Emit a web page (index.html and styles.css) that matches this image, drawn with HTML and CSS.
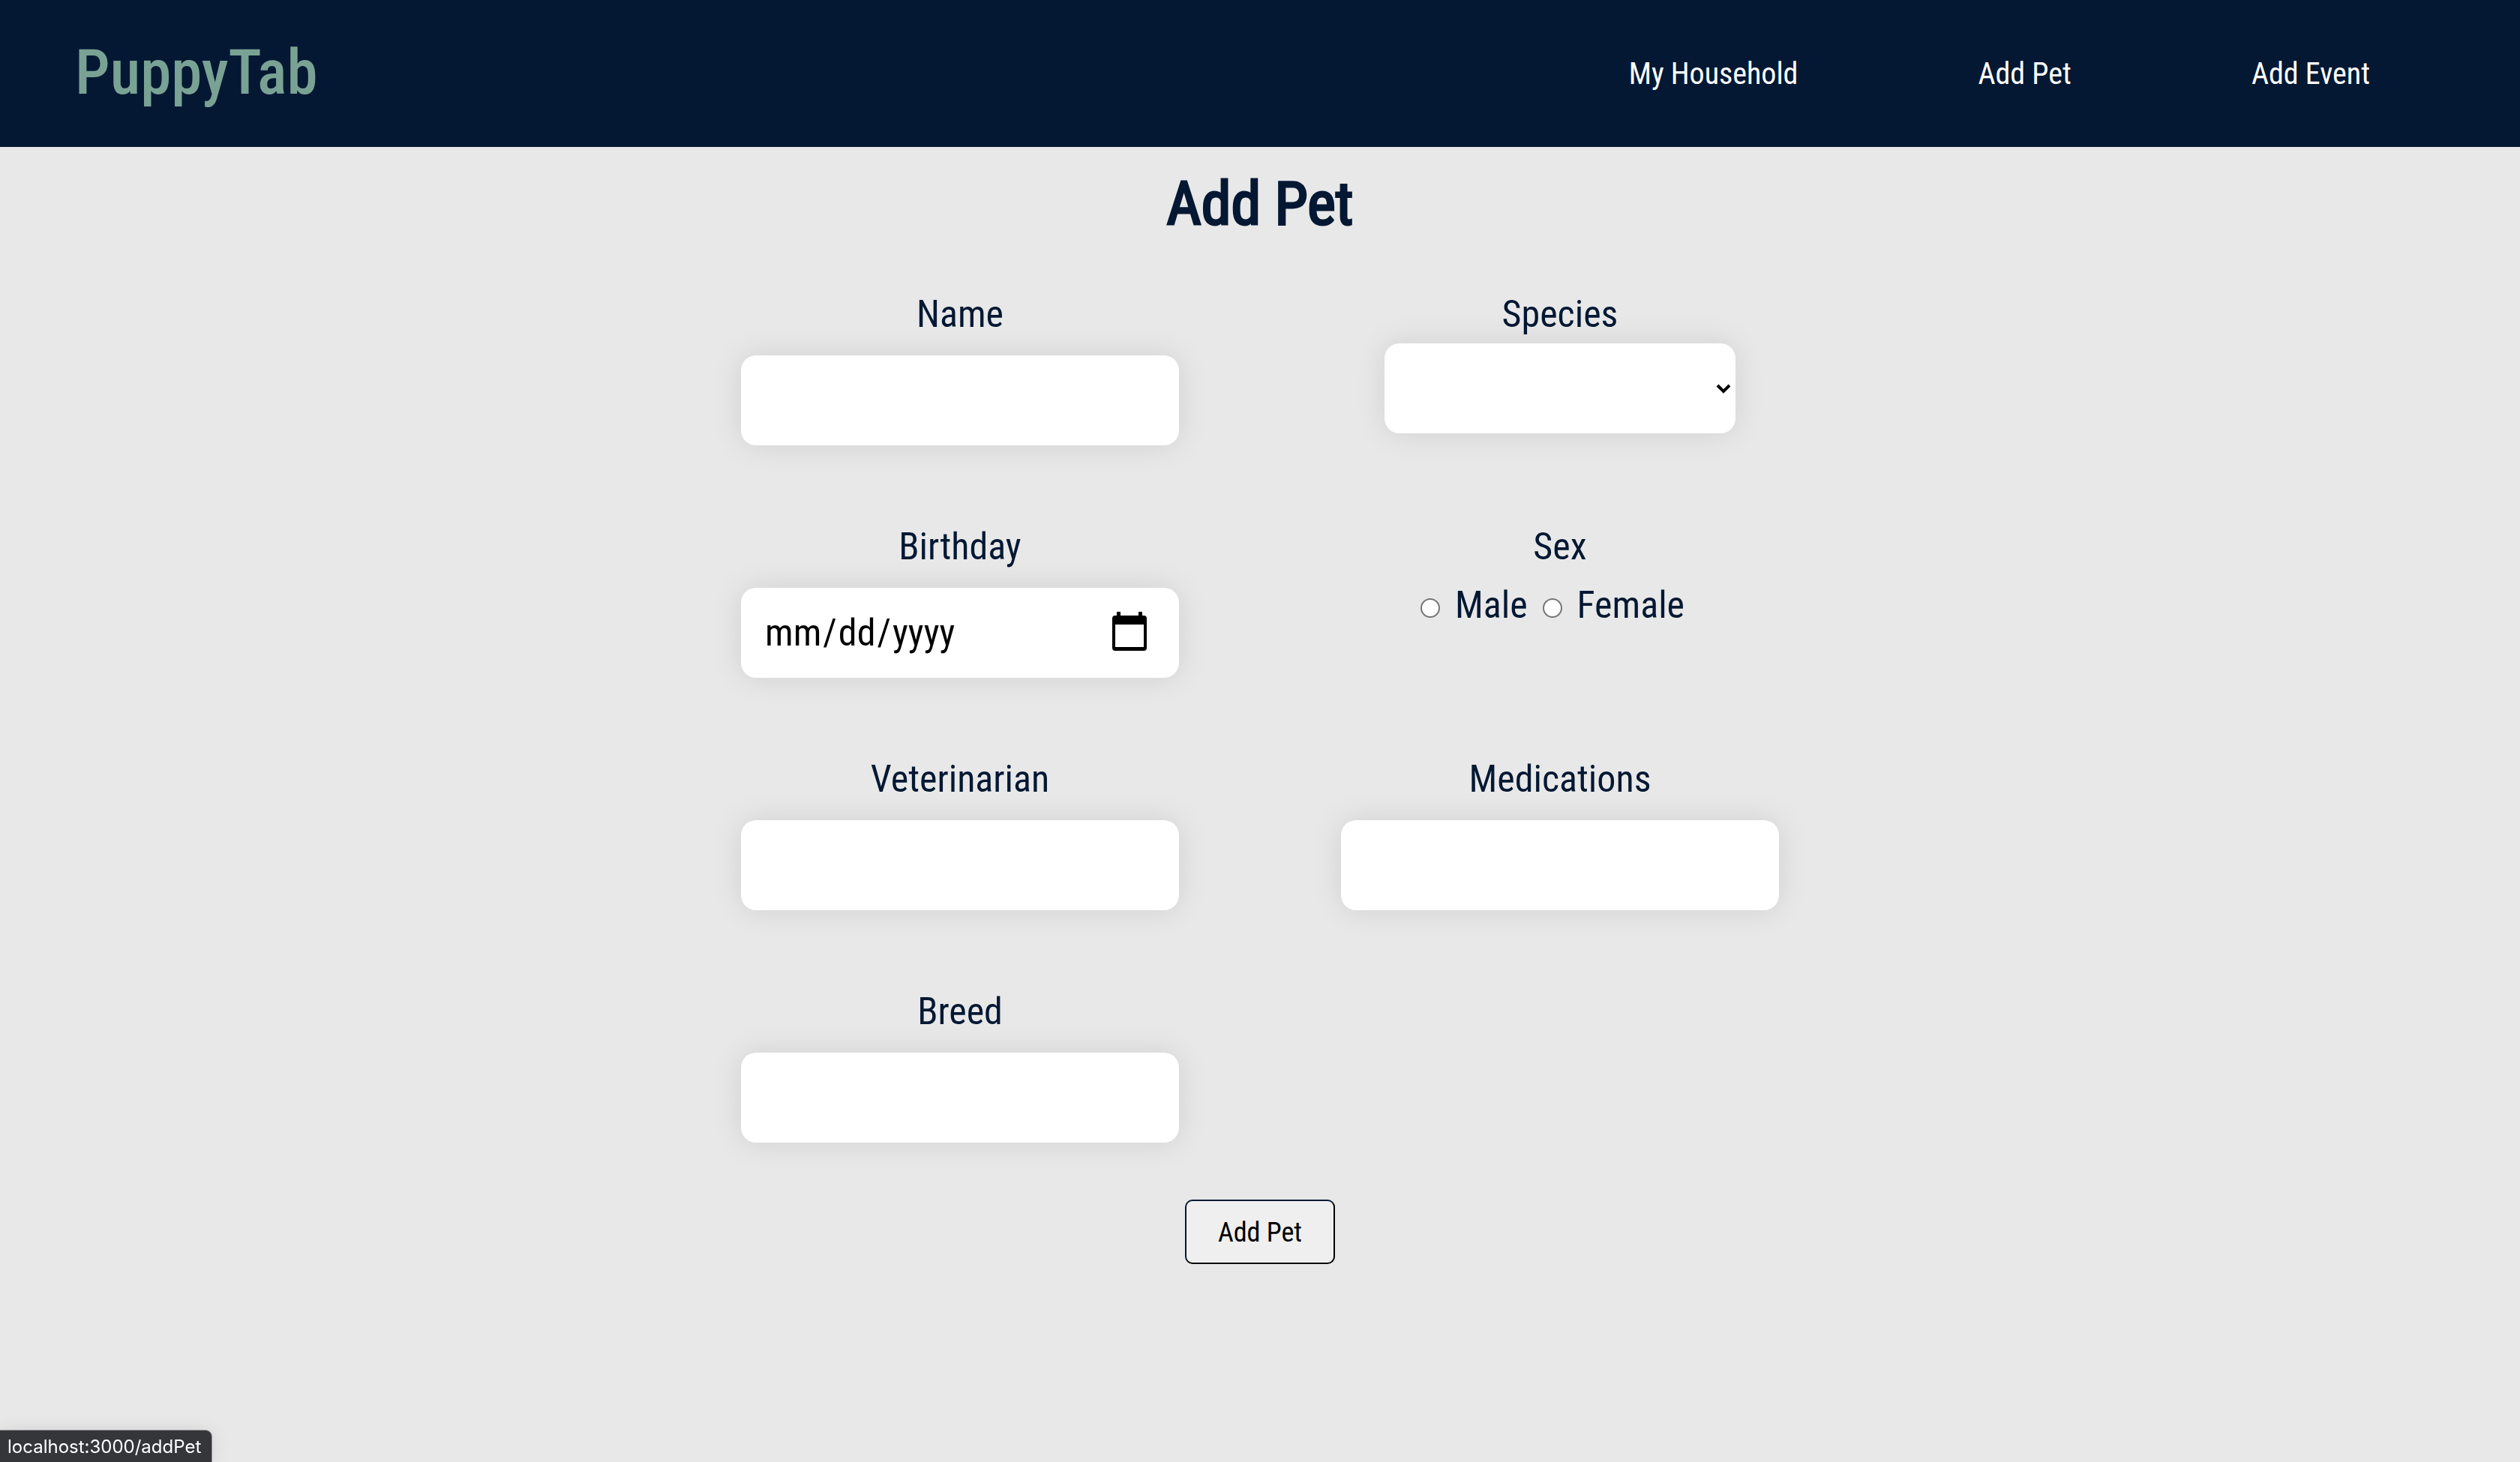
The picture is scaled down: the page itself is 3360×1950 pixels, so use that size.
FILE: index.html
```html
<!DOCTYPE html>
<html lang="en">
<head>
<meta charset="utf-8">
<meta name="viewport" content="width=device-width, initial-scale=1">
<title>PuppyTab</title>
<link rel="stylesheet" href="styles.css">
</head>
<body>
<header class="header">
  <a class="logo" href="#home">PuppyTab</a>
  <nav class="nav">
    <a href="#household">My Household</a>
    <a href="#addPet">Add Pet</a>
    <a href="#addEvent">Add Event</a>
  </nav>
</header>
<main class="main">
  <h1 class="title">Add Pet</h1>
  <form class="form">
    <div class="fields">
      <div class="field">
        <label for="name">Name</label>
        <input class="control" id="name" type="text">
      </div>
      <div class="field field-select">
        <label for="species">Species</label>
        <select class="control select" id="species"><option></option></select>
      </div>
      <div class="field">
        <label for="birthday">Birthday</label>
        <input class="control date" id="birthday" type="date">
      </div>
      <fieldset class="field field-radio">
        <legend>Sex</legend>
        <div class="radios">
          <input type="radio" name="sex" id="male"><label for="male">Male</label>
          <input type="radio" name="sex" id="female"><label for="female">Female</label>
        </div>
      </fieldset>
      <div class="field">
        <label for="vet">Veterinarian</label>
        <input class="control" id="vet" type="text">
      </div>
      <div class="field">
        <label for="medications">Medications</label>
        <input class="control" id="medications" type="text">
      </div>
      <div class="field">
        <label for="breed">Breed</label>
        <input class="control" id="breed" type="text">
      </div>
    </div>
    <button class="submit" type="submit">Add Pet</button>
  </form>
</main>
<div class="status">localhost:3000/addPet</div>
</body>
</html>
```
FILE: styles.css
```css
* { box-sizing: border-box; }

body {
  margin: 0;
  min-height: 100vh;
  background: #e8e8e8;
  color: #041833;
  font-family: "Roboto Condensed", "Liberation Sans Narrow", Roboto, sans-serif;
  font-size: 50px;
  line-height: 60px;
}

.header {
  display: flex;
  align-items: center;
  justify-content: space-between;
  height: 196px;
  padding: 0 200px 0 100px;
  background: #041833;
}

.logo {
  padding-bottom: 2px;
  color: #7aa294;
  font-size: 83px;
  font-weight: 500;
  line-height: 100px;
  text-decoration: none;
}

.nav {
  display: flex;
  gap: 240px;
  padding-top: 2px;
}

.nav a {
  color: #fff;
  font-size: 40px;
  line-height: 48px;
  text-decoration: none;
}

.main { text-align: center; }

.title {
  margin: 0;
  padding-top: 26px;
  font-size: 80px;
  font-weight: 400;
  line-height: 100px;
  -webkit-text-stroke: 3px currentColor;
}

.form {
  display: flex;
  flex-direction: column;
  align-items: center;
  gap: 76px;
  max-width: 1600px;
  margin: 67px auto 0;
}

.fields {
  display: grid;
  grid-template-columns: 1fr 1fr;
  row-gap: 105px;
  width: 100%;
}

.field {
  display: flex;
  flex-direction: column;
  align-items: center;
  gap: 25px;
  min-width: 0;
  margin: 0;
  padding: 0;
  border: 0;
}

.field-select { gap: 9px; }

.field-radio { display: block; }

.field-radio legend {
  margin: 0 auto;
  padding: 0;
}

.control {
  width: 584px;
  max-width: 100%;
  height: 120px;
  padding: 0 32px;
  border: 0;
  border-radius: 20px;
  background: #fff;
  box-shadow: 0 0 40px rgba(0, 0, 0, 0.1);
  color: #000;
  font: inherit;
}

.select {
  width: 468px;
  appearance: none;
  background: #fff url("data:image/svg+xml,%3Csvg xmlns='http://www.w3.org/2000/svg' width='20' height='16'%3E%3Cpath d='M2 4l8 8 8-8' fill='none' stroke='%23000' stroke-width='4'/%3E%3C/svg%3E") no-repeat right 6px center;
}

.date { padding-left: 30px; }

.date::-webkit-datetime-edit-month-field,
.date::-webkit-datetime-edit-day-field,
.date::-webkit-datetime-edit-year-field { padding: 0 2px; }

.date::-webkit-calendar-picker-indicator {
  width: 48px;
  height: 52px;
  margin: 0 10px 4px 0;
  padding: 0;
  background: url("data:image/svg+xml,%3Csvg xmlns='http://www.w3.org/2000/svg' width='48' height='52'%3E%3Cpath fill-rule='evenodd' d='M7 0h5v5h24V0h5v5h2a4 4 0 0 1 4 4v39a4 4 0 0 1-4 4H5a4 4 0 0 1-4-4V9a4 4 0 0 1 4-4h2zM5 17v30h38V17z'/%3E%3C/svg%3E") no-repeat center;
}

.radios {
  display: flex;
  align-items: center;
  justify-content: center;
  margin-top: 18px;
}

.radios input {
  appearance: none;
  width: 26px;
  height: 26px;
  margin: 8px 20px 0 0;
  border: 2px solid #767676;
  border-radius: 50%;
  background: #fff;
}

.radios input:checked { background: #767676; }

.radios label { margin-right: 20px; }

.submit {
  height: 86px;
  padding: 2px 42px 0;
  border: 2px solid;
  border-color: #041833 #000 #000 #041833;
  border-radius: 10px;
  background: #efefef;
  color: #000;
  font: inherit;
  font-size: 36px;
  line-height: 44px;
}

.status {
  position: fixed;
  bottom: 0;
  left: 0;
  height: 42px;
  padding: 0 14px 0 10px;
  border-top-right-radius: 8px;
  background: #35363a;
  box-shadow: 0 0 24px rgba(0, 0, 0, 0.1), 0 0 0 1px #999;
  color: #fff;
  font-family: Inter, sans-serif;
  font-size: 24px;
  line-height: 44px;
}
```
